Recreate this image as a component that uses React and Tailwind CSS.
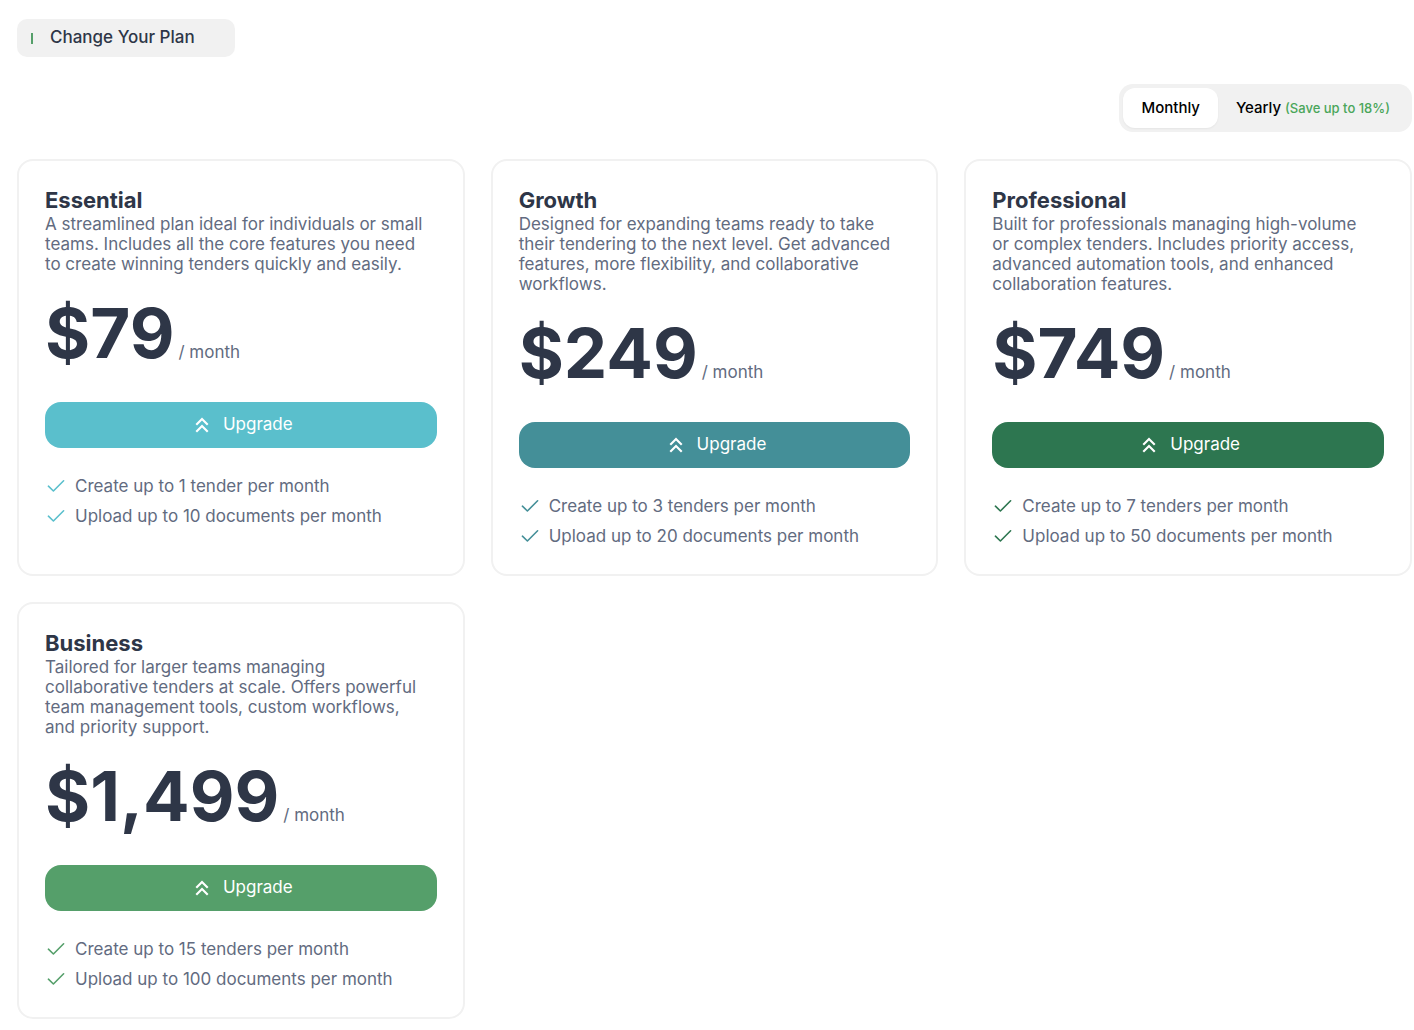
import React, { useState } from "react";
import clsx from "clsx";
import { MdKeyboardDoubleArrowUp } from "react-icons/md";

const PLANS = [
  {
    name: "Essential",
    description:
      "A streamlined plan ideal for individuals or small teams. Includes all the core features you need to create winning tenders quickly and easily.",
    price: "$79",
    button: "bg-[#5abfcc]",
    check: "text-[#5abfcc]",
    features: ["Create up to 1 tender per month", "Upload up to 10 documents per month"],
  },
  {
    name: "Growth",
    description:
      "Designed for expanding teams ready to take their tendering to the next level. Get advanced features, more flexibility, and collaborative workflows.",
    price: "$249",
    button: "bg-[#448f98]",
    check: "text-[#448f98]",
    features: ["Create up to 3 tenders per month", "Upload up to 20 documents per month"],
  },
  {
    name: "Professional",
    description:
      "Built for professionals managing high-volume or complex tenders. Includes priority access, advanced automation tools, and enhanced collaboration features.",
    price: "$749",
    button: "bg-[#2d7650]",
    check: "text-[#2d7650]",
    features: ["Create up to 7 tenders per month", "Upload up to 50 documents per month"],
  },
  {
    name: "Business",
    description:
      "Tailored for larger teams managing collaborative tenders at scale. Offers powerful team management tools, custom workflows, and priority support.",
    price: "$1,499",
    button: "bg-[#559f6a]",
    check: "text-[#559f6a]",
    features: ["Create up to 15 tenders per month", "Upload up to 100 documents per month"],
  },
];

function CheckIcon({ className }) {
  return (
    <svg
      className={clsx("h-[22px] w-[22px] shrink-0", className)}
      viewBox="0 0 22 22"
      fill="none"
      stroke="currentColor"
      strokeWidth="1.6"
      strokeLinecap="round"
      strokeLinejoin="round"
      aria-hidden="true"
    >
      <path d="M3.4 11.2 8.4 16 18.6 5.8" />
    </svg>
  );
}

function PlanCard({ plan }) {
  return (
    <article className="rounded-2xl border-2 border-[#f1f1f1] p-[26px]">
      <h2 className="text-[22px] leading-[27px] font-bold text-[#2e3647]">{plan.name}</h2>
      <p className="pr-2 leading-5">{plan.description}</p>
      <p className="mt-[18px] flex items-baseline gap-1">
        <span className="text-[69px] leading-[82px] font-bold text-[#2e3647]">{plan.price}</span>
        <span>/ month</span>
      </p>
      <button
        type="button"
        className={clsx(
          "mt-7 flex h-[46px] w-full cursor-pointer items-center justify-center gap-2 rounded-2xl text-white",
          plan.button
        )}
      >
        <MdKeyboardDoubleArrowUp className="h-[26px] w-[26px]" aria-hidden="true" />
        Upgrade
      </button>
      <ul className="mt-[26px] flex flex-col gap-1.5">
        {plan.features.map((feature) => (
          <li key={feature} className="flex items-center gap-2 leading-6">
            <CheckIcon className={plan.check} />
            {feature}
          </li>
        ))}
      </ul>
    </article>
  );
}

export default function App() {
  const [billing, setBilling] = useState("monthly");

  const tab = "h-10 cursor-pointer rounded-xl px-[18px]";
  const activeTab = "bg-white shadow-xs";

  return (
    <main className="flex flex-col gap-[27px] bg-white pt-[19px] pr-0.5 pb-3 pl-[17px] font-[Inter,sans-serif] text-[17px] text-[#626b80]">
      <h1 className="flex h-[38px] items-center gap-[17px] self-start rounded-[10px] bg-[#f1f1f1] pr-10 pl-3.5 font-medium text-[#2e3647]">
        <span className="h-[11px] w-0.5 bg-[#559f6a]" />
        Change Your Plan
      </h1>

      {/* billing period switch */}
      <div className="flex self-end rounded-[14px] bg-[#f1f1f1] p-1 text-[15px] font-medium text-black">
        <button
          type="button"
          aria-pressed={billing === "monthly"}
          onClick={() => setBilling("monthly")}
          className={clsx(tab, billing === "monthly" && activeTab)}
        >
          Monthly
        </button>
        <button
          type="button"
          aria-pressed={billing === "yearly"}
          onClick={() => setBilling("yearly")}
          className={clsx(tab, billing === "yearly" && activeTab)}
        >
          Yearly <span className="text-[13px] text-[#4aa65a]">(Save up to 18%)</span>
        </button>
      </div>

      <div className="grid grid-cols-1 gap-[26px] md:grid-cols-2 lg:grid-cols-3">
        {PLANS.map((plan) => (
          <PlanCard key={plan.name} plan={plan} />
        ))}
      </div>
    </main>
  );
}
